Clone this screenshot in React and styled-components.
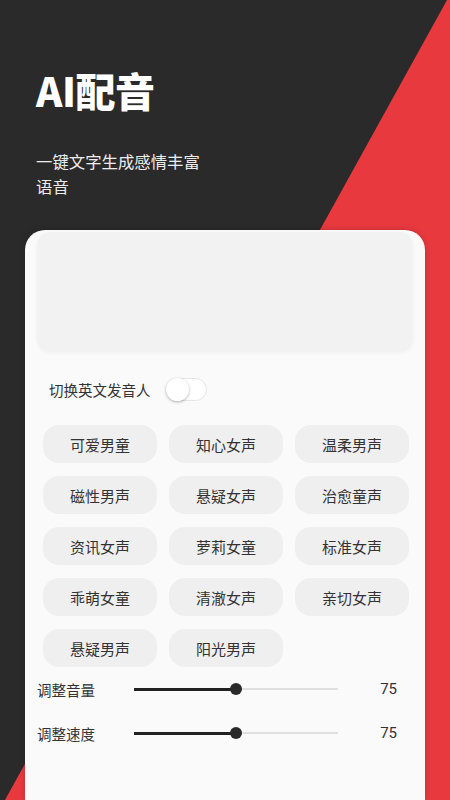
import styled, { createGlobalStyle } from "styled-components"

const GlobalStyle = createGlobalStyle`
    html, body {
        margin: 0;
        padding: 0;
    }
    body {
        font-family: "Noto Sans CJK SC", "Noto Sans", sans-serif;
    }
`

const Page = styled.div`
    position: relative;
    display: flex;
    flex-direction: column;
    min-height: 100vh;
    background-color: #2a2a2a;
    overflow: hidden;

    &::before {
        content: "";
        position: absolute;
        inset: 0;
        background-color: #e8393f;
        clip-path: polygon(447px 0, 100% 0, 100% 100%, 5px 100%);
    }
`

const Header = styled.header`
    position: relative;
    padding: 66px 36px 0;
    color: #ffffff;
`

const Title = styled.h1`
    margin: 0;
    font-size: 40px;
    line-height: 48px;
    font-weight: 900;
    letter-spacing: -0.5px;
`

const Subtitle = styled.p`
    margin: 35px 0 0;
    max-width: 170px;
    font-size: 16.4px;
    line-height: 25px;
    color: #ededed;
`

const Card = styled.main`
    position: relative;
    flex: 1;
    margin: 31px 25px 0;
    padding: 2px 12px 0;
    background-color: #fafafa;
    border-radius: 20px 20px 0 0;
    box-shadow: 0 0 6px rgba(0, 0, 0, 0.18);
`

const TextBox = styled.div`
    height: 120px;
    background-color: #f2f2f2;
    border-radius: 14px;
    box-shadow: 0 1px 4px rgba(0, 0, 0, 0.04);
`

const ToggleRow = styled.div`
    display: flex;
    align-items: center;
    gap: 15px;
    height: 40px;
    margin-top: 17px;
    padding-left: 12px;
    font-size: 14.5px;
    color: #333333;
`

const Switch = styled.span`
    position: relative;
    display: inline-block;
    width: 41px;
    height: 23px;
    box-sizing: border-box;
    border: 1px solid #e6e6e6;
    border-radius: 12px;
    background-color: ${(p) => (p.$on ? "#2a2a2a" : "#ffffff")};

    &::after {
        content: "";
        position: absolute;
        top: -1px;
        left: ${(p) => (p.$on ? "18px" : "-1px")};
        width: 23px;
        height: 23px;
        border-radius: 50%;
        background-color: #ffffff;
        box-shadow: 0 1px 3px rgba(0, 0, 0, 0.3);
    }
`

const VoiceGrid = styled.div`
    display: grid;
    grid-template-columns: repeat(3, 114px);
    column-gap: 12px;
    row-gap: 13px;
    margin-top: 16px;
    padding: 0 6px;
`

const Chip = styled.button`
    height: 38px;
    border: none;
    border-radius: 16px;
    background-color: ${(p) => (p.$active ? "#2a2a2a" : "#efefef")};
    color: ${(p) => (p.$active ? "#ffffff" : "#333333")};
    font-family: inherit;
    font-size: 15px;
    padding: 0;
`

const SliderRow = styled.div`
    display: flex;
    align-items: center;
    height: 44px;
    font-size: 14.5px;
    color: #333333;
`

const SliderLabel = styled.span`
    width: 97px;
`

const Track = styled.div`
    position: relative;
    width: 204px;
    height: 2px;
    background-color: #e0e0e0;
`

const Fill = styled.div`
    height: 3px;
    margin-top: -0.5px;
    background-color: #222222;
`

const Thumb = styled.span`
    position: absolute;
    top: 50%;
    width: 12px;
    height: 12px;
    border-radius: 50%;
    background-color: #2a2a2a;
    transform: translate(-50%, -50%);
`

const Value = styled.span`
    margin-left: auto;
    padding-right: 16px;
    font-family: "Roboto", "Noto Sans", sans-serif;
    font-size: 15px;
`

const voices = [
    "可爱男童", "知心女声", "温柔男声",
    "磁性男声", "悬疑女声", "治愈童声",
    "资讯女声", "萝莉女童", "标准女声",
    "乖萌女童", "清澈女声", "亲切女声",
    "悬疑男声", "阳光男声",
]

const sliders = [
    { label: "调整音量", value: 75, max: 150 },
    { label: "调整速度", value: 75, max: 150 },
]

function Slider({ value, max }) {
    const pct = (value / max) * 100
    return (
        <Track>
            <Fill style={{ width: `${pct}%` }} />
            <Thumb style={{ left: `${pct}%` }} />
        </Track>
    )
}

function App() {
    return (
        <Page>
            <GlobalStyle />
            <Header>
                <Title>AI配音</Title>
                <Subtitle>一键文字生成感情丰富语音</Subtitle>
            </Header>
            <Card>
                <TextBox />
                <ToggleRow>
                    切换英文发音人
                    <Switch />
                </ToggleRow>
                <VoiceGrid>
                    {voices.map((v) => (
                        <Chip key={v}>{v}</Chip>
                    ))}
                </VoiceGrid>
                {sliders.map((s) => (
                    <SliderRow key={s.label}>
                        <SliderLabel>{s.label}</SliderLabel>
                        <Slider value={s.value} max={s.max} />
                        <Value>{s.value}</Value>
                    </SliderRow>
                ))}
            </Card>
        </Page>
    )
}

export default App
